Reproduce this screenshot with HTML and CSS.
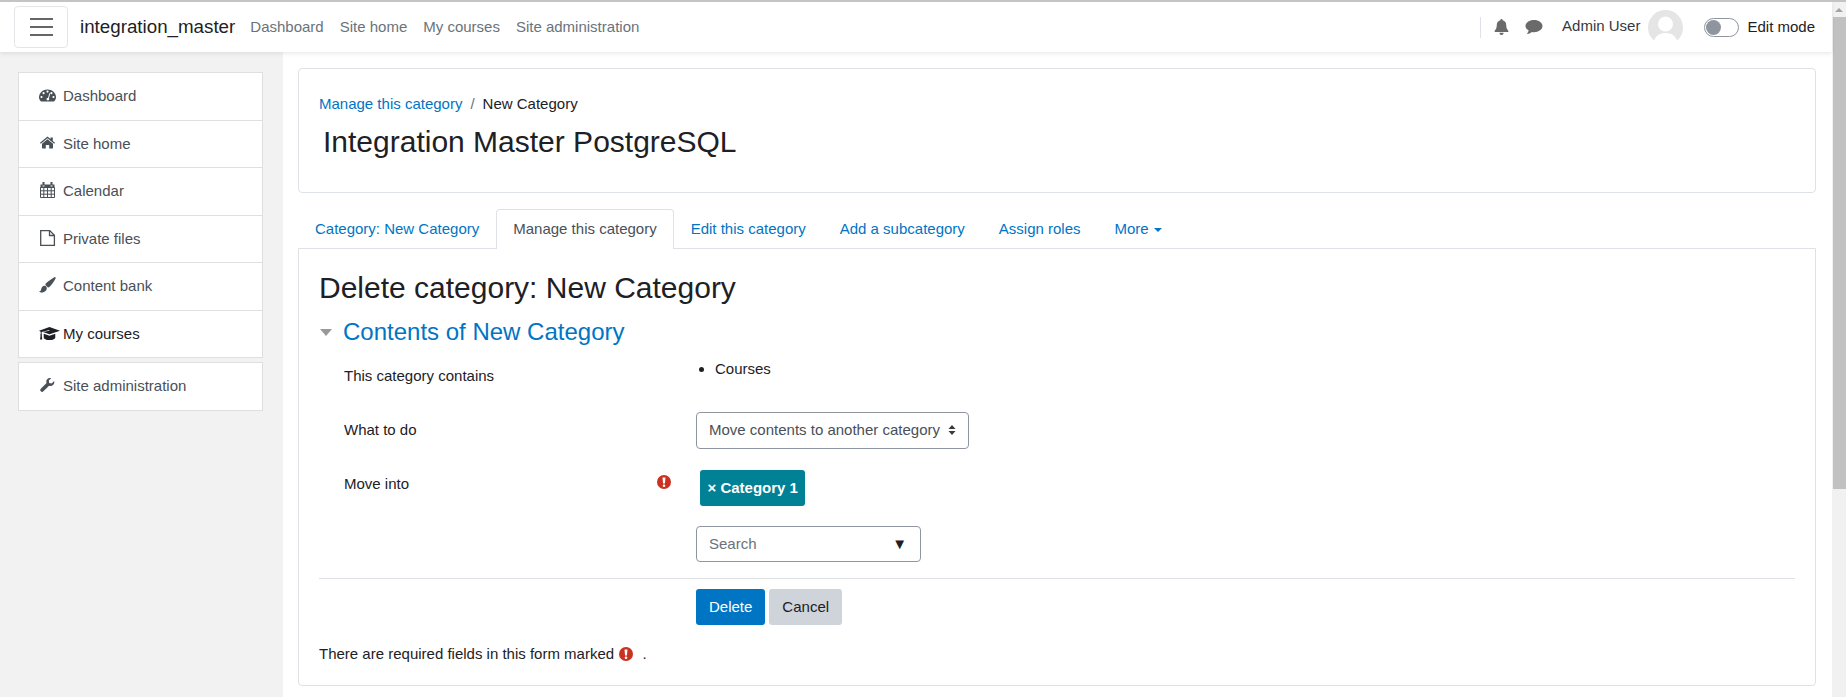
FILE: index.html
```html
<!DOCTYPE html>
<html lang="en">
<head>
    <meta charset="UTF-8">
    <meta name="viewport" content="width=device-width, initial-scale=1.0">
    <title>Delete category</title>
    <link rel="stylesheet" href="styles.css">
</head>
<body>

<div class="page">
    <nav class="navbar">
        <button class="menu-btn" aria-label="Menu">
            <span></span><span></span><span></span>
        </button>
        <a class="brand" href="#">integration_master</a>
        <div class="nav-links">
            <a href="#">Dashboard</a>
            <a href="#">Site home</a>
            <a href="#">My courses</a>
            <a href="#">Site administration</a>
        </div>
        <div class="nav-right">
            <div class="nav-icons">
                <svg class="icon-bell" viewBox="0 0 16 18"><path d="M8 0a1.3 1.3 0 0 1 1.3 1.4C12 2 13.300 4 13.300 6.800c0 3.700 1 5 2.400 6.500.4.500.1 1.300-.6 1.300H.9c-.7 0-1-.8-.6-1.300C1.700 11.800 2.700 10.500 2.700 6.800 2.700 4 4 2 6.700 1.400A1.300 1.300 0 0 1 8 0zM5.800 15.400h4.400A2.200 2.200 0 0 1 8 18a2.200 2.200 0 0 1-2.200-2.600z"/></svg>
                <svg class="icon-chat" viewBox="0 0 18 16"><path d="M9 1c4.700 0 8.500 2.700 8.500 6.100S13.700 13.200 9 13.200c-.8 0-1.500-.1-2.200-.2C5.600 14.100 4 15 1.800 15c.9-1 1.600-2.100 1.900-3.400C1.700 10.500.5 8.900.5 7.100.5 3.700 4.300 1 9 1z"/></svg>
            </div>
            <span class="user-name">Admin User</span>
            <svg class="avatar" viewBox="0 0 35 35">
                <circle cx="17.500" cy="17.500" r="17.500" fill="#e5e5e5"/>
                <circle cx="17.500" cy="14" r="7.500" fill="#fff"/>
                <path d="M5 35c1-8 5-12 12.500-12S29 27 30 35z" fill="#fff"/>
            </svg>
            <span class="switch"><span class="knob"></span></span>
            <span class="edit-label">Edit mode</span>
        </div>
    </nav>

    <div class="layout">
        <aside class="sidebar">
            <ul class="side-list">
                <li>
                    <svg class="side-icon" viewBox="-1 -1 18 18">
                        <path d="M1 13.500C-.3 12.200-1 10.800-1 9.300-1 5 2.800 1.500 7.500 1.500S16 5 16 9.300c0 1.500-.7 2.900-2 4.200z"/>
                        <path class="icon-hole" d="M1.500 7.900a1.100 1.100 0 1 0 0 2.200 1.100 1.100 0 0 0 0-2.200zM3.600 4.100a1.100 1.100 0 1 0 0 2.200 1.100 1.100 0 0 0 0-2.200zM7.500 2.500a1.100 1.100 0 1 0 0 2.200 1.100 1.100 0 0 0 0-2.200zM13.500 7.900a1.100 1.100 0 1 0 0 2.200 1.100 1.100 0 0 0 0-2.200zM11.400 4.100a1.100 1.100 0 1 0 0 2.200 1.100 1.100 0 0 0 0-2.200zM9.300 5.300l.9.300-1.300 4.800c.4.400.5 1.200 0 1.700-.6.600-1.500.6-2 0-.6-.6-.5-1.600.2-2 .3-.2.6-.2.900-.2z"/>
                    </svg>
                    <a href="#">Dashboard</a>
                </li>
                <li>
                    <svg class="side-icon" viewBox="-1 -1 18 18"><path d="M7.500.5l3 2.500V1.500h2.300V5L15 6.800l-.8 1L7.500 2.300.8 7.800 0 6.800zM7.500 3.300L13 7.800V12c0 .3-.2.500-.5.500H9.200V9H5.800v3.500H2.500c-.3 0-.5-.2-.5-.5V7.800z"/></svg>
                    <a href="#">Site home</a>
                </li>
                <li>
                    <svg class="side-icon" viewBox="-1 -1 18 18">
                        <path d="M2.500-1h2v3.500h-2zM10.500-1h2v3.500h-2zM.5 1.500h2v2h2v-2h6v2h2v-2h2v3.500H.5z"/>
                        <path class="icon-line" d="M.5 4.500h14v10H.5zM3.800 4.500v10M7.500 4.500v10M11.200 4.500v10M.5 7.800h14M.5 11.200h14"/>
                    </svg>
                    <a href="#">Calendar</a>
                </li>
                <li>
                    <svg class="side-icon" viewBox="-1 -1 18 18"><path class="icon-line file-line" d="M.7-.4h9l4.700 4.700v10.100H.7zM9.500-.4v4.900h4.900"/></svg>
                    <a href="#">Private files</a>
                </li>
                <li>
                    <svg class="side-icon" viewBox="-1 -1 18 18"><path transform="translate(-1.200 -1.500) scale(1.08)" d="M15.300.7c.5.4.3 1.100 0 1.600-1.200 2.200-3.700 5.900-5.300 7.300-.5.400-1 .6-1.500.5L6.100 7.900c-.1-.6.200-1.200.6-1.600C8.400 4.800 12 2.200 14 1c.4-.3.900-.6 1.300-.3zM5.400 8.600c1.200.1 2 1.100 2 2.300 0 2.500-2.500 3.900-4.600 3.900-1 0-2-.3-2.500-.9 1.100-.2 1.600-.9 1.900-2.200.3-1.500 1.500-3.200 3.200-3.100z"/></svg>
                    <a href="#">Content bank</a>
                </li>
                <li class="current">
                    <svg class="side-icon side-icon-cap" viewBox="-1 -1 23 18"><path transform="translate(-1 -.6) scale(1.05 1.05)" d="M10 1.500L20 5l-10 3.500-6.200-2.300L9.800 5l.1-.5-.1-.2L2.500 6.300v2.200c.5.300.5.900.1 1.200l.5 3.800H1l.5-3.800c-.4-.3-.4-.9.1-1.200V6L0 5zM4.500 8l5.500 1.900L15.500 8v3.300C15.500 13 13 14 10 14s-5.500-1-5.500-2.700z"/></svg>
                    <a href="#">My courses</a>
                </li>
            </ul>
            <ul class="side-list">
                <li>
                    <svg class="side-icon" viewBox="-1 -1 18 18"><path transform="translate(-.5 -.5) scale(.95)" d="M15.500 3.600c.3 1.700-.1 3.300-1.300 4.300-1.100 1-2.700 1.200-4.100.7l-6 6c-.8.800-2 .8-2.700 0-.8-.8-.8-1.900 0-2.700l6-6c-.5-1.400-.3-3 .7-4.100C9.200.6 10.800.2 12.500.5L9.800 3.200l.4 2.500 2.500.5z"/></svg>
                    <a href="#">Site administration</a>
                </li>
            </ul>
        </aside>

        <main class="content">
            <header class="card page-head">
                <div class="breadcrumb">
                    <a href="#">Manage this category</a>
                    <span class="sep">/</span>
                    <span>New Category</span>
                </div>
                <h1>Integration Master PostgreSQL</h1>
            </header>

            <ul class="tabs">
                <li><a href="#">Category: New Category</a></li>
                <li class="active"><a href="#">Manage this category</a></li>
                <li><a href="#">Edit this category</a></li>
                <li><a href="#">Add a subcategory</a></li>
                <li><a href="#">Assign roles</a></li>
                <li><a href="#">More <i class="caret"></i></a></li>
            </ul>

            <section class="panel">
                <h2>Delete category: New Category</h2>
                <h3 class="legend"><i class="legend-arrow"></i><a href="#">Contents of New Category</a></h3>

                <div class="form-row row-contains">
                    <div class="form-label">This category contains</div>
                    <ul class="form-list"><li>Courses</li></ul>
                </div>

                <div class="form-row row-action">
                    <div class="form-label">What to do</div>
                    <div class="select">
                        <span>Move contents to another category</span>
                        <svg class="select-arrows" viewBox="0 0 8 12"><path d="M4 1l3.500 4h-7zM4 11L.5 7h7z"/></svg>
                    </div>
                </div>

                <div class="form-row row-move">
                    <div class="form-label">
                        Move into
                        <svg class="req req-form" viewBox="0 0 16 16"><use href="#req-icon"/></svg>
                    </div>
                    <div class="move-field">
                        <span class="tag">× Category 1</span>
                        <div class="search-box">
                            <span>Search</span>
                            <span class="search-arrow">▼</span>
                        </div>
                    </div>
                </div>

                <hr>

                <div class="form-row row-buttons">
                    <div class="form-label"></div>
                    <div class="buttons">
                        <button class="btn btn-primary">Delete</button>
                        <button class="btn btn-secondary">Cancel</button>
                    </div>
                </div>

                <p class="required-note">There are required fields in this form marked
                    <svg class="req" viewBox="0 0 16 16"><use href="#req-icon"/></svg>
                    <span class="dot">.</span>
                </p>
            </section>
        </main>
    </div>
</div>

<div class="scrollbar">
    <div class="scroll-up"></div>
    <div class="scroll-thumb"></div>
</div>

<svg class="defs" width="0" height="0">
    <symbol id="req-icon" viewBox="0 0 16 16">
        <circle cx="8" cy="8" r="8" fill="#ca3120"/>
        <path fill="#fff" d="M6.300 2.800h3.400L9.100 9.800H6.900zM8 10.800a1.500 1.500 0 1 1 0 3 1.500 1.500 0 0 1 0-3z"/>
    </symbol>
</svg>

</body>
</html>
```

FILE: styles.css
```css
/* General Styling */
* {
    box-sizing: border-box;
    margin: 0;
    padding: 0;
}

html, body {
    height: 697px;
    overflow: hidden;
}

body {
    font-family: "Liberation Sans", Arial, sans-serif;
    font-size: 15px;
    line-height: 22.5px;
    color: #1d2125;
    background: #fff;
    display: flex;
    border-top: 2px solid #c4c4c4;
}

a {
    color: #0075c4;
    text-decoration: none;
}

ul {
    list-style: none;
}

.defs {
    position: absolute;
}

.page {
    flex: 1;
    min-width: 0;
    display: flex;
    flex-direction: column;
}

/* Top navbar */
.navbar {
    height: 50px;
    padding-left: 14px;
    display: flex;
    align-items: center;
    background: #fff;
    box-shadow: 0 2px 4px rgba(0, 0, 0, 0.08);
    position: relative;
}

.menu-btn {
    width: 54px;
    height: 42px;
    background: #fff;
    border: 1px solid #e3e5e8;
    border-radius: 4px;
    display: flex;
    flex-direction: column;
    justify-content: center;
    align-items: center;
    gap: 6px;
}

.menu-btn span {
    width: 23px;
    height: 2px;
    background: #666;
}

.brand {
    margin-left: 12px;
    font-size: 18.75px;
    color: #1d2125;
}

.nav-links {
    margin-left: 15px;
    display: flex;
    gap: 16px;
}

.nav-links a {
    color: #6a737b;
}

.nav-right {
    margin-left: auto;
    display: flex;
    align-items: center;
    padding-right: 17px;
}

.nav-icons {
    display: flex;
    align-items: center;
    height: 21px;
    border-left: 1px solid #dee2e6;
    padding-left: 13px;
    fill: #6a6a6a;
}

.icon-bell {
    width: 15px;
    height: 16px;
}

.icon-chat {
    width: 18px;
    height: 16px;
    margin-left: 16px;
}

.user-name {
    margin-left: 19px;
    margin-top: -1px;
    color: #33393f;
}

.avatar {
    width: 35px;
    height: 35px;
    margin-left: 8px;
}

.switch {
    width: 35px;
    height: 19px;
    margin-left: 21px;
    border: 1px solid #8f959e;
    border-radius: 10px;
    background: #fff;
    display: block;
    padding: 1px;
}

.knob {
    display: block;
    width: 15px;
    height: 15px;
    border-radius: 50%;
    background: #8f959e;
}

.edit-label {
    margin-left: 8px;
    color: #1d2125;
}

/* Page body */
.layout {
    flex: 1;
    display: flex;
    min-height: 0;
}

.sidebar {
    width: 283px;
    background: #f2f2f2;
    padding: 20px 20px 0 18px;
}

.side-list {
    background: #fff;
    border: 1px solid #dfdfdf;
    margin-bottom: 4px;
}

.side-list li {
    height: 47.500px;
    padding-left: 21px;
    display: flex;
    align-items: center;
    border-bottom: 1px solid #dfdfdf;
}

.side-list li:last-child {
    border-bottom: 0;
    height: 46.500px;
}

.side-list a {
    color: #495057;
}

.side-list .current a {
    color: #1d2125;
}

.side-icon {
    width: 18px;
    height: 18px;
    margin-left: -1px;
    margin-right: 6px;
    fill: #495057;
    flex-shrink: 0;
}

.side-icon-cap {
    width: 23px;
    margin-right: 1px;
    fill: #1d2125;
}

.icon-hole {
    fill: #fff;
}

.icon-line {
    fill: none;
    stroke: #495057;
    stroke-width: 1;
}

.file-line {
    stroke-width: 1.300;
}

/* Main column */
.content {
    flex: 1;
    min-width: 0;
    padding: 16px 16px 0 15px;
}

.card {
    border: 1px solid #dee2e6;
    border-radius: 4px;
}

.page-head {
    height: 125px;
    padding: 24px 20px 0;
}

.breadcrumb {
    display: flex;
    gap: 8px;
}

.breadcrumb .sep {
    color: #6a737b;
}

h1 {
    margin: 8px 0 0 4px;
    font-size: 30px;
    line-height: 36px;
    font-weight: 400;
}

/* Tabs */
.tabs {
    display: flex;
    margin-top: 16px;
    height: 39px;
    position: relative;
    z-index: 1;
}

.tabs li {
    padding: 7.500px 16px 0;
    border: 1px solid transparent;
    border-bottom: 0;
}

.tabs li.active {
    background: #fff;
    border-color: #dee2e6;
    border-radius: 4px 4px 0 0;
    height: 40px;
}

.tabs li.active a {
    color: #495057;
}

.caret {
    display: inline-block;
    vertical-align: middle;
    margin-left: 1px;
    border-top: 4.500px solid currentColor;
    border-left: 4.500px solid transparent;
    border-right: 4.500px solid transparent;
}

.panel {
    height: 438px;
    border: 1px solid #dee2e6;
    border-radius: 0 0 4px 4px;
    padding: 21px 20px 0;
}

h2 {
    font-size: 30px;
    line-height: 36px;
    font-weight: 400;
}

.legend {
    margin-top: 12px;
    font-size: 24px;
    line-height: 28px;
    font-weight: 400;
    display: flex;
    align-items: center;
}

.legend-arrow {
    width: 0;
    height: 0;
    margin: 0 11px 0 1px;
    border-top: 7px solid #999;
    border-left: 6.500px solid transparent;
    border-right: 6.500px solid transparent;
}

/* Form */
.form-row {
    display: flex;
    padding-left: 25px;
}

.form-label {
    width: 352px;
    flex-shrink: 0;
    position: relative;
}

.row-contains {
    margin-top: 13px;
    height: 46px;
}

.row-contains .form-label {
    padding-top: 6px;
}

.form-list {
    list-style: disc;
    padding-left: 19px;
    margin-top: -1px;
}

.row-action {
    height: 38px;
    align-items: center;
    margin-top: 6px;
}

.select {
    width: 273px;
    height: 37px;
    border: 1px solid #8f959e;
    border-radius: 4px;
    padding: 0 12px;
    display: flex;
    align-items: center;
    justify-content: space-between;
    color: #495057;
}

.select-arrows {
    width: 8px;
    height: 12px;
    fill: #343a40;
}

.row-move {
    margin-top: 21px;
}

.row-move .form-label {
    padding-top: 3px;
}

.req {
    width: 14px;
    height: 14px;
    vertical-align: -2px;
}

.req-form {
    position: absolute;
    left: 313px;
    top: 5px;
}

.move-field {
    display: flex;
    flex-direction: column;
    align-items: flex-start;
}

.tag {
    margin-left: 4px;
    height: 36px;
    padding: 0 7.500px;
    background: #008196;
    border-radius: 3px;
    color: #fff;
    font-weight: 700;
    display: flex;
    align-items: center;
}

.search-box {
    margin-top: 20px;
    width: 225px;
    height: 36px;
    border: 1px solid #8f959e;
    border-radius: 4px;
    padding: 0 12px;
    display: flex;
    align-items: center;
    justify-content: space-between;
    color: #6a737b;
}

.search-arrow {
    color: #1d2125;
    font-size: 15px;
    margin-right: 1px;
}

hr {
    border: 0;
    border-top: 1px solid #dee2e6;
    margin: 16px 0 10px;
}

.buttons {
    display: flex;
    gap: 4px;
}

.btn {
    height: 36px;
    padding: 0 13px;
    border: 0;
    border-radius: 3px;
    font: inherit;
}

.btn-primary {
    background: #0075c4;
    color: #fff;
}

.btn-secondary {
    background: #ced4da;
    color: #1d2125;
}

.required-note {
    margin-top: 18px;
}

.required-note .req {
    margin-left: 1px;
}

.dot {
    margin-left: 5px;
}

/* Fake browser scrollbar */
.scrollbar {
    width: 14px;
    background: #f1f1f1;
    flex-shrink: 0;
}

.scroll-up {
    height: 15px;
    position: relative;
}

.scroll-up::after {
    content: "";
    position: absolute;
    left: 3px;
    top: 6px;
    border-bottom: 4px solid #a3a3a3;
    border-left: 4px solid transparent;
    border-right: 4px solid transparent;
}

.scroll-thumb {
    height: 472px;
    margin-left: 1px;
    background: #c1c1c1;
}
```
